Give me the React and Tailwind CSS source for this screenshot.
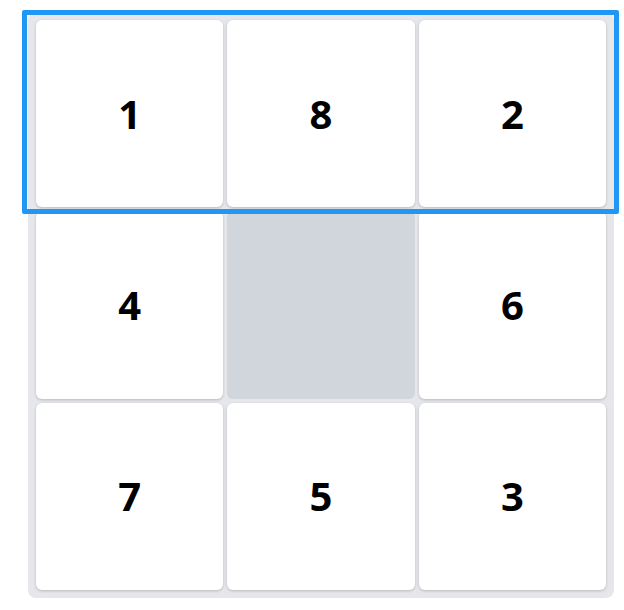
import React, { useState } from "react";

const START = [1, 8, 2, 4, 0, 6, 7, 5, 3];

const Tile = ({ value }) => {
  if (!value) {
    return <div className="aspect-square rounded-md bg-gray-300" />;
  }
  return (
    <button className="aspect-square rounded-md bg-white shadow-[0_1px_3px_rgba(0,0,0,0.2)] flex items-center justify-center text-[40px] font-bold text-black">
      {value}
    </button>
  );
};

const App = () => {
  const [tiles] = useState(START);
  const selectedRow = 0;

  return (
    <div className="min-h-[610px] bg-white pl-[28px] pt-[12px] font-['Open_Sans','Noto_Sans',sans-serif]">
      <div className="relative w-[586px] h-[586px] rounded-lg bg-gray-200 p-2">
        <div className="grid grid-cols-3 gap-1">
          {tiles.map((t, i) => (
            <Tile key={i} value={t} />
          ))}
        </div>
        {/* highlight around the active row */}
        {selectedRow === 0 && (
          <div className="absolute left-[-6px] top-[-2px] w-[597px] h-[204px] border-[5px] border-[#2196f3] rounded-[2px] pointer-events-none" />
        )}
      </div>
    </div>
  );
};

export default App;
